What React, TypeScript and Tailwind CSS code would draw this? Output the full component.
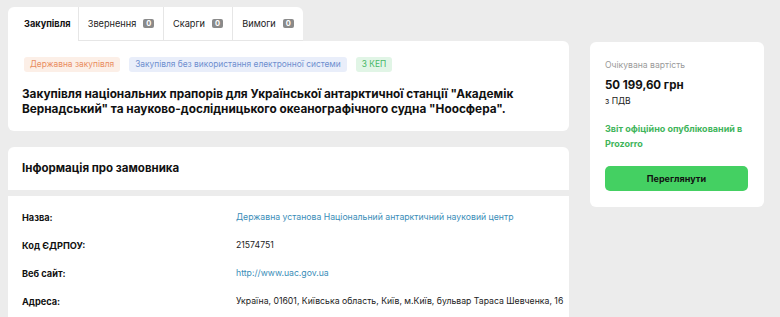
import React from "react";

const font = { fontFamily: "Inter, 'Noto Sans', sans-serif" };

function Tab({ label, count, active, w }: { label: string; count?: number; active?: boolean; w: string }) {
  return (
    <div
      className={
        "flex items-center gap-[7px] h-full shrink-0 border-r border-[#e6e6e6] last:border-r-0 " +
        w +
        (active ? " pl-4 font-bold text-[#111]" : " justify-center border-b text-[#222]")
      }
    >
      <span className="text-[9.2px] leading-none">{label}</span>
      {count !== undefined && (
        <span className="bg-[#8a8a8a] text-white text-[7.5px] font-bold leading-none rounded-[2px] w-[11px] h-[9px] flex items-center justify-center">
          {count}
        </span>
      )}
    </div>
  );
}

function Row({ label, value, link }: { label: string; value: string; link?: boolean }) {
  return (
    <div className="flex h-[28px] items-center whitespace-nowrap">
      <div className="w-[214px] shrink-0 text-[9.2px] font-bold text-[#111]">{label}</div>
      <div className={"text-[8.7px] " + (link ? "text-[#3a8db8]" : "text-[#222]")}>{value}</div>
    </div>
  );
}

export default function App() {
  return (
    <div style={font} className="w-[780px] h-[317px] overflow-hidden bg-[#ececec] flex gap-[21px] pl-2 pt-[7px]">
      <div className="w-[561px] flex flex-col">
        <div className="flex w-[295px] h-[34px] bg-white rounded-t-[6px] overflow-hidden">
          <Tab label="Закупівля" active w="w-[71px]" />
          <Tab label="Звернення" count={0} w="w-[85px]" />
          <Tab label="Скарги" count={0} w="w-[69px]" />
          <Tab label="Вимоги" count={0} w="w-[70px]" />
        </div>
        <div className="bg-white rounded-tr-[6px] rounded-b-[6px] h-[90px] px-[16px] pt-4">
          <div className="flex gap-[9px]">
            <span className="h-[15px] px-[6px] flex items-center rounded-[3px] bg-[#fcefe7] text-[#e98d5f] text-[8.4px]">Державна закупівля</span>
            <span className="h-[15px] px-[6px] flex items-center rounded-[3px] bg-[#e9eefa] text-[#6e8fcf] text-[8.4px]">Закупівля без використання електронної системи</span>
            <span className="h-[15px] px-[6px] flex items-center rounded-[3px] bg-[#e1f5e6] text-[#49b866] text-[8.4px]">3 КЕП</span>
          </div>
          <div className="mt-[15px] -ml-[2px] text-[11.8px] font-bold leading-[15px] text-[#111]">
            Закупівля національних прапорів для Української антарктичної станції "Академік Вернадський" та науково-дослідницького океанографічного судна "Ноосфера".
          </div>
        </div>
        <div className="mt-4 bg-white rounded-t-[6px] h-[43px] px-[14px] flex items-center">
          <span className="text-[11.5px] font-bold text-[#111]">Інформація про замовника</span>
        </div>
        <div className="mt-[6px] bg-white flex-1 px-[14px] pt-[8px]">
          <Row label="Назва:" value="Державна установа Національний антарктичний науковий центр" link />
          <Row label="Код ЄДРПОУ:" value="21574751" />
          <Row label="Веб сайт:" value="http://www.uac.gov.ua" link />
          <Row label="Адреса:" value="Україна, 01601, Київська область, Київ, м.Київ, бульвар Тараса Шевченка, 16" />
        </div>
      </div>
      <div className="w-[174px] self-start mt-[35px] h-[165px] bg-white rounded-[6px] px-[15px] pt-[17px]">
        <div className="text-[8.6px] text-[#9a9a9a] leading-[12px]">Очікувана вартість</div>
        <div className="mt-[6px] text-[11.5px] font-bold text-[#111] leading-[16px]">50 199,60 грн</div>
        <div className="mt-[2px] text-[8.6px] text-[#222] leading-[12px]">з ПДВ</div>
        <div className="mt-[14px] text-[9px] font-bold text-[#3fb55b] leading-[15px]">
          Звіт офіційно опублікований в<br />Prozorro
        </div>
        <button className="mt-[15px] w-[143px] h-[25px] rounded-[5px] bg-[#44d062] text-[9px] font-bold text-[#111]">
          Переглянути
        </button>
      </div>
    </div>
  );
}
